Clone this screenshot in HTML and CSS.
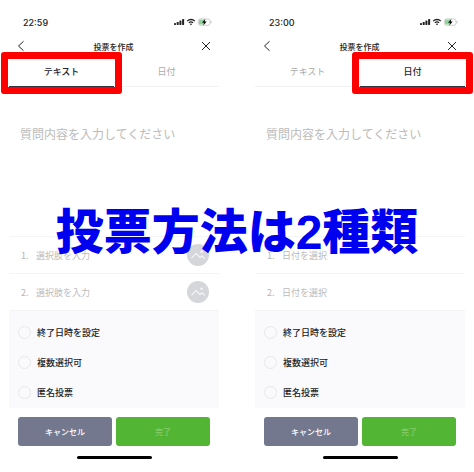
FILE: index.html
```html
<!DOCTYPE html>
<html lang="ja">
<head>
    <meta charset="UTF-8">
    <meta name="viewport" content="width=device-width, initial-scale=1.0">
    <title>投票方法は2種類</title>
    <link rel="stylesheet" href="styles.css">
</head>
<body>
    <!-- Shared icons -->
    <svg class="sprite" aria-hidden="true">
        <symbol id="status" viewBox="0 0 38 10">
            <rect x="0" y="6" width="2" height="2" rx=".4" fill="#222"/>
            <rect x="2.7" y="5" width="2" height="3" rx=".4" fill="#222"/>
            <rect x="5.4" y="3.5" width="2" height="4.500" rx=".4" fill="#222"/>
            <rect x="8.100" y="2" width="2" height="6" rx=".4" fill="#222"/>
            <path d="M13.200 4.100a5.300 5.300 0 0 1 7.600 0M14.900 5.900a3 3 0 0 1 4.200 0" fill="none" stroke="#222" stroke-width="1.300"/>
            <path d="M15.800 6.900q1.200-.9 2.400 0L17 8.300z" fill="#222"/>
            <rect x="24.400" y="1.900" width="11.600" height="6.400" rx="2" fill="#fff" stroke="#bbb" stroke-width=".7"/>
            <path d="M26.200 2.600H30v5h-3.800q-1.200 0-1.200-1.200V3.800q0-1.200 1.200-1.200z" fill="#8fd69b"/>
            <path d="M37 4v2.200" stroke="#bbb" stroke-width=".8"/>
            <path d="M31.300 1.800l-3.300 3.900h2l-.7 2.900 3.500-4.200h-2z" fill="#111"/>
        </symbol>
        <symbol id="back" viewBox="0 0 12 12">
            <path d="M8.500 1.300L3.500 6l5 4.700" fill="none" stroke="#222" stroke-width="1"/>
        </symbol>
        <symbol id="close" viewBox="0 0 12 12">
            <path d="M2 2l8 8M10 2l-8 8" fill="none" stroke="#222" stroke-width="1"/>
        </symbol>
        <symbol id="photo" viewBox="0 0 22 22">
            <circle cx="11" cy="11" r="11" fill="#d5d6da"/>
            <path d="M4.500 14.200l4.600-4.700 4 4 1.800-1.700 2.900 2.900" fill="none" stroke="#f5f5f7" stroke-width="1.200"/>
            <circle cx="14.600" cy="7.700" r="1.300" fill="#f5f5f7"/>
        </symbol>
    </svg>

    <main class="compare">
        <section class="phone">
            <div class="status-bar">
                <span>22:59</span>
                <svg class="status-icons"><use href="#status"/></svg>
            </div>
            <header class="nav">
                <button class="icon-btn" aria-label="戻る"><svg><use href="#back"/></svg></button>
                <h2>投票を作成</h2>
                <button class="icon-btn" aria-label="閉じる"><svg><use href="#close"/></svg></button>
            </header>
            <div class="tabs">
                <button class="tab active">テキスト</button>
                <button class="tab">日付</button>
            </div>
            <input class="question" type="text" placeholder="質問内容を入力してください" aria-label="質問内容">
            <div class="choice">
                <label for="text1">1.</label>
                <input id="text1" type="text" placeholder="選択肢を入力">
                <button class="photo-btn" aria-label="画像を追加"><svg><use href="#photo"/></svg></button>
            </div>
            <div class="choice">
                <label for="text2">2.</label>
                <input id="text2" type="text" placeholder="選択肢を入力">
                <button class="photo-btn" aria-label="画像を追加"><svg><use href="#photo"/></svg></button>
            </div>
            <div class="options">
                <label><input type="checkbox">終了日時を設定</label>
                <label><input type="checkbox">複数選択可</label>
                <label><input type="checkbox">匿名投票</label>
            </div>
            <div class="actions">
                <button class="cancel">キャンセル</button>
                <button class="done">完了</button>
            </div>
            <div class="home-bar"></div>
        </section>

        <section class="phone">
            <div class="status-bar">
                <span>23:00</span>
                <svg class="status-icons"><use href="#status"/></svg>
            </div>
            <header class="nav">
                <button class="icon-btn" aria-label="戻る"><svg><use href="#back"/></svg></button>
                <h2>投票を作成</h2>
                <button class="icon-btn" aria-label="閉じる"><svg><use href="#close"/></svg></button>
            </header>
            <div class="tabs">
                <button class="tab">テキスト</button>
                <button class="tab active">日付</button>
            </div>
            <input class="question" type="text" placeholder="質問内容を入力してください" aria-label="質問内容">
            <div class="choice">
                <label for="date1">1.</label>
                <input id="date1" type="text" placeholder="日付を選択">
            </div>
            <div class="choice">
                <label for="date2">2.</label>
                <input id="date2" type="text" placeholder="日付を選択">
            </div>
            <div class="options">
                <label><input type="checkbox">終了日時を設定</label>
                <label><input type="checkbox">複数選択可</label>
                <label><input type="checkbox">匿名投票</label>
            </div>
            <div class="actions">
                <button class="cancel">キャンセル</button>
                <button class="done">完了</button>
            </div>
            <div class="home-bar"></div>
        </section>

        <h1 class="caption">投票方法は2種類</h1>
    </main>
</body>
</html>
```
FILE: styles.css
```css
* {
    margin: 0;
    padding: 0;
    box-sizing: border-box;
}

body {
    font-family: "Noto Sans CJK JP", sans-serif;
    font-size: 9px;
    background: #fff;
    color: #222;
}

button,
input {
    font: inherit;
    border: none;
    background: none;
}

button {
    cursor: pointer;
}

svg {
    display: block;
    width: 100%;
    height: 100%;
}

.sprite {
    position: absolute;
    width: 0;
    height: 0;
}

.compare {
    position: relative;
    display: flex;
    gap: 36px;
    padding: 15px 9px 12px;
}

.phone {
    flex: 1;
    min-width: 0;
}

.status-bar {
    display: flex;
    justify-content: space-between;
    align-items: center;
    height: 14px;
    padding: 0 7px 0 14px;
    font-family: Inter, sans-serif;
    font-weight: 500;
}

.status-icons {
    width: 38px;
    height: 10px;
}

.nav {
    display: flex;
    justify-content: space-between;
    align-items: center;
    height: 30px;
    padding: 4px 7px 0 6px;
}

.nav h2 {
    font-size: 8px;
    font-weight: 500;
}

.icon-btn {
    width: 12px;
    height: 12px;
}

.tabs {
    display: flex;
    height: 28px;
    border-bottom: 1px solid #f2f2f2;
}

.tab {
    position: relative;
    flex: 1;
    height: 28px;
    padding-bottom: 3px;
    color: #aaa;
}

.tab.active {
    color: #223;
    font-weight: 500;
    border-bottom: 1px solid #334;
}

/* Red frame round the selected tab */
.tab.active::after {
    content: "";
    position: absolute;
    inset: -7px -8px -8px;
    border: 7px solid #fe0000;
    border-radius: 3px;
}

.question {
    display: block;
    width: 100%;
    height: 92px;
    margin-bottom: 57px;
    padding: 0 11px;
    font-size: 12px;
}

::placeholder {
    color: #bbb;
    opacity: 1;
}

.choice {
    display: flex;
    align-items: center;
    height: 37px;
    padding: 0 10px 0 12px;
    border-top: 1px solid #f4f4f4;
    color: #b5b5b5;
}

.choice label {
    width: 15px;
}

.choice input {
    flex: 1;
    min-width: 0;
}

.photo-btn {
    width: 22px;
    height: 22px;
}

.options {
    display: flex;
    flex-direction: column;
    gap: 17px;
    padding: 15px 9px 9px;
    background: #fafafc;
    border-top: 1px solid #f4f4f4;
}

.options label {
    display: flex;
    align-items: center;
    gap: 6px;
    height: 13px;
    font-weight: 500;
}

.options input {
    appearance: none;
    width: 13px;
    height: 13px;
    border: 1px solid #e8e8ea;
    border-radius: 50%;
}

.actions {
    display: flex;
    gap: 4px;
    padding: 9px 9px 10px;
}

.actions button {
    flex: 1;
    height: 29px;
    border-radius: 3px;
    font-size: 8px;
    font-weight: 500;
}

.cancel {
    background: #73788f;
    color: #fff;
}

.done {
    background: #52b533;
    color: #83cb6d;
}

.home-bar {
    width: 75px;
    height: 3px;
    margin: 0 auto;
    background: #000;
    border-radius: 2px;
}

/* Caption laid over both screens */
.caption {
    position: absolute;
    top: 203px;
    left: 0;
    right: 0;
    font-family: "Liberation Sans", "Noto Sans CJK JP", sans-serif;
    font-size: 48px;
    line-height: 60px;
    font-weight: 900;
    text-align: center;
    white-space: nowrap;
    color: #0000f0;
    pointer-events: none;
}
```
